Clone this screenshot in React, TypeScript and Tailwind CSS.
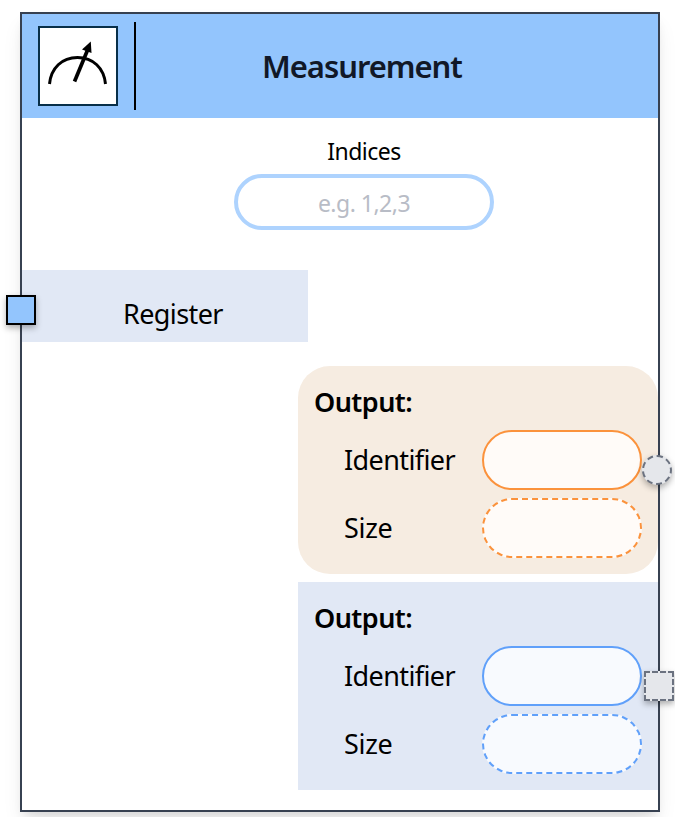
import React from "react";

type OutputProps = {
  panel: string;
  solid: string;
  dashed: string;
};

function OutputPanel({ panel, solid, dashed }: OutputProps) {
  return (
    <section className={`h-[208px] w-[360px] pt-4 pr-4 pl-4 text-[27px] text-black ${panel}`}>
      <h2 className="h-12 text-[27px] leading-[39px] font-semibold tracking-[-0.55px]">Output:</h2>
      <div className="flex h-[60px] items-center justify-between pl-[30px]">
        <span className="leading-[60px] tracking-[-0.6px]">Identifier</span>
        <div className={`h-[60px] w-40 rounded-full border-2 ${solid}`} />
      </div>
      <div className="mt-2 flex h-[60px] items-center justify-between pl-[30px]">
        <span className="leading-[60px] tracking-[-0.3px]">Size</span>
        <div className={`h-[60px] w-40 rounded-full border-2 border-dashed ${dashed}`} />
      </div>
    </section>
  );
}

export default function App() {
  return (
    <div className="h-[817px] w-[675px] overflow-hidden bg-white pt-3 pl-5 font-['Noto_Sans','Open_Sans',sans-serif]">
      <main className="relative h-[800px] w-[640px] border-2 border-[#374151] bg-white shadow-[0_12px_20px_-4px_rgba(0,0,0,0.1),0_6px_10px_-4px_rgba(0,0,0,0.1)]">
        <header className="flex h-[104px] items-center bg-[#93c5fd] pl-4">
          <div className="h-20 w-20 border-2 border-[#082f49] bg-white">
            <svg viewBox="0 0 76 76" className="h-full w-full">
              <path d="M9.5 56C11 40 22 29.5 37.5 29.5S64 40 65.5 56" fill="none" stroke="#000" strokeWidth="3" />
              <path d="M34.5 53.5L48 21" fill="none" stroke="#000" strokeWidth="3.7" />
              <path d="M50.8 13.5L42 21.5L51.5 25Z" fill="#000" />
            </svg>
          </div>
          <div className="ml-4 h-[88px] w-0.5 bg-black" />
          <h1 className="ml-[126px] text-[31px] leading-[104px] font-semibold tracking-[-1.05px] whitespace-nowrap text-[#111827]">Measurement</h1>
        </header>

        <div className="flex h-[152px] flex-col items-center pt-[18px] pl-12">
          <label className="text-[23px] leading-[30px] tracking-[-0.5px] text-black">Indices</label>
          <div className="mt-2 h-14 w-[260px] rounded-full border-4 border-[#aed3fe] text-center text-[23px] leading-[50px] tracking-[-0.5px] text-[#b8bcc6]">
            e.g. 1,2,3
          </div>
        </div>

        <div className="flex h-[72px] w-[286px] bg-[#e1e8f5] pl-[101px]">
          <span className="text-[27px] leading-[87px] tracking-[-0.6px] text-black">Register</span>
        </div>

        <div className="mt-6 flex flex-col items-end gap-2">
          <OutputPanel panel="rounded-[32px] bg-[#f6ece1]" solid="border-[#fb923c] bg-[#fffbf8]" dashed="border-[#fb923c] bg-[#fffbf8]" />
          <OutputPanel panel="bg-[#e1e8f5]" solid="border-[#60a0fa] bg-[#f8fafe]" dashed="border-[#60a0fa] bg-[#f8fafe]" />
        </div>

        <div className="absolute top-[281px] left-[-16px] h-[30px] w-[30px] border-2 border-black bg-[#93c5fd] shadow-[0_3px_6px_rgba(0,0,0,0.3)]" />
        <div className="absolute top-[441px] left-[620px] h-[30px] w-[30px] rounded-full border-2 border-dashed border-[#6b7280] bg-[#e5e7eb] shadow-[0_3px_6px_rgba(0,0,0,0.3)]" />
        <div className="absolute top-[657px] left-[622px] h-[30px] w-[30px] border-2 border-dashed border-[#6b7280] bg-[#e5e7eb] shadow-[0_3px_6px_rgba(0,0,0,0.3)]" />
      </main>
    </div>
  );
}
